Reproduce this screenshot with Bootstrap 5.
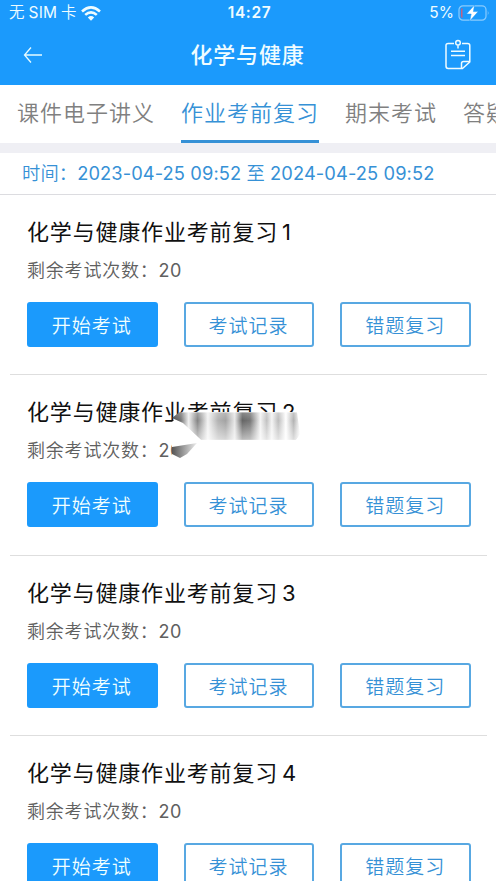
<!DOCTYPE html>
<html lang="zh-CN">
<head>
<meta charset="utf-8">
<meta name="viewport" content="width=device-width, initial-scale=1">
<title>化学与健康</title>
<link href="https://cdn.jsdelivr.net/npm/bootstrap@5.3.0/dist/css/bootstrap.min.css" rel="stylesheet">
<style>
:root { --brand: #1b9afc; --link: #3691d6; }
body { font-family: Inter, "Noto Sans CJK SC", sans-serif; background: #fff; height: 881px; overflow: hidden; line-height: 1; }
.topbar { background: var(--brand); height: 85px; color: #effcff; }
.status { height: 26px; font-size: 15.5px; padding: 0 6px 0 9px; }
.status > div { flex: 1 1 0; }
.carrier { letter-spacing: .1px; font-weight: 350; }
.clock { font-weight: 600; letter-spacing: .6px; }
.appbar { height: 58px; padding: 0 25px 0 23px; }
.appbar h1 { font-size: 22px; font-weight: 500; letter-spacing: .8px; line-height: 1; padding-left: 7px; }
.tabs { height: 58px; padding-left: 17px; gap: 26px; }
.tabs .nav-link { color: #808080; font-size: 22px; letter-spacing: 1px; padding: 0; height: 58px; line-height: 57px; font-weight: 350; white-space: nowrap; flex: none; border-bottom: 3px solid transparent; border-radius: 0; }
.tabs .nav-link.active { color: var(--link); border-bottom-color: var(--link); }
.band { height: 10px; background: #efeff4; }
.period { height: 42px; padding: 0 0 0 22px; color: var(--link); font-size: 18.3px; letter-spacing: .1px; font-weight: 350; border-bottom: 1px solid #dcdce0; white-space: pre; }
.digits { font-weight: 400; }
.exam { height: 180.33px; margin: 0 9px 0 10px; padding: 24px 16px 0 17px; border-bottom: 1px solid #dedede; }
.exam h2 { font-size: 22px; letter-spacing: .82px; line-height: 26px; color: #101010; margin-bottom: 15px; font-weight: 400; white-space: nowrap; }
.exam h2 span { margin-left: 4px; }
.exam p { font-size: 18px; letter-spacing: .8px; line-height: 22px; color: #606060; margin-bottom: 20px; font-weight: 350; }
.exam p .digits { letter-spacing: .3px; }
.exam .btn { flex: 1 1 0; min-width: 0; height: 45px; padding: 2px 1px 0 0; font-size: 19px; letter-spacing: 1px; line-height: 41px; border-radius: 3px; font-weight: 350; }
.btn-fill { background: var(--brand); border: 2px solid var(--brand); color: #f0ffff; }
.btn-line { background: #fff; border: 2px solid #58a8e2; color: var(--link); }
.actions { gap: 26px; }
.smear { left: 155px; top: 33px; }
</style>
<script src="https://cdn.jsdelivr.net/npm/bootstrap@5.3.0/dist/js/bootstrap.bundle.min.js"></script>
</head>
<body>
<header class="topbar">
  <div class="status d-flex align-items-center">
    <div class="d-flex align-items-center carrier">无<span class="ms-1 digits">SIM</span><span class="ms-1">卡</span>
      <svg class="ms-1" width="20" height="15" viewBox="0 0 20 15" fill="none" stroke="#effcff" stroke-width="2.6"><path d="M1 5.5Q10-2.6 19 5.5M4.2 8.9Q10 3.7 15.8 8.9"/><path d="M6.8 11.4Q10 8.7 13.2 11.4L10 14.8Z" fill="#effcff" stroke="none"/></svg>
    </div>
    <div class="text-center clock">14:27</div>
    <div class="d-flex align-items-center justify-content-end">5%
      <svg class="ms-1" width="32" height="16" viewBox="0 0 32 16"><rect x="1" y=".8" width="27" height="14.4" rx="4" fill="none" stroke="#8acbfd" stroke-width="1.2"/><path d="M4.5 3Q3 3 3 5v6q0 2 1.500 2z" fill="#c45f82"/><path d="M29.800 5.500q1.600 2.500 0 5z" fill="#8acbfd"/><path d="M16.500 0 8.500 9h4.700l-1.500 7L20.200 6.600h-4.800z" fill="#fff" stroke="#1b9afc" stroke-width=".5"/></svg>
    </div>
  </div>
  <nav class="appbar d-flex align-items-center justify-content-between">
    <svg width="20" height="18" viewBox="0 0 20 18" fill="none" stroke="#e5fbff" stroke-width="1.3"><path d="M8 1.500 1.500 9 8 16.500M1.500 9H19"/></svg>
    <h1 class="m-0">化学与健康</h1>
    <svg width="26" height="32" viewBox="0 0 26 32" fill="none" stroke="#effcff" stroke-width="1.500" stroke-linejoin="round"><path d="M9 4.500H3.200Q1 4.500 1 6.500V27Q1 29.500 3.200 29.500H17.500L24.800 23V6.500q0-2-2.200-2H17M16.500 29.500v-5q0-2 2-2h6.300"/><circle cx="13" cy="3.800" r="2.300"/><path d="M13 6.300v3.200M6 12.300h14M6 16.500h14"/></svg>
  </nav>
</header>
<nav class="nav tabs flex-nowrap overflow-hidden">
  <a class="nav-link">课件电子讲义</a>
  <a class="nav-link active">作业考前复习</a>
  <a class="nav-link">期末考试</a>
  <a class="nav-link">答疑</a>
</nav>
<div class="band"></div>
<div class="period d-flex align-items-center">时间：<span class="digits">2023-04-25 09:52 </span>至<span class="digits"> 2024-04-25 09:52</span></div>
<main>
  <section class="exam">
    <h2>化学与健康作业考前复习<span>1</span></h2>
    <p>剩余考试次数：<span class="digits">20</span></p>
    <div class="d-flex actions"><button class="btn btn-fill">开始考试</button><button class="btn btn-line">考试记录</button><button class="btn btn-line">错题复习</button></div>
  </section>
  <section class="exam position-relative">
    <h2>化学与健康作业考前复习<span>2</span></h2>
    <p>剩余考试次数：<span class="digits">20</span></p>
    <svg class="smear position-absolute" width="150" height="62" viewBox="165 408 150 62">
      <defs>
        <linearGradient id="streaks" gradientUnits="userSpaceOnUse" x1="172" y1="0" x2="300" y2="0">
          <stop offset="0" stop-color="#333"/><stop offset=".07" stop-color="#666"/><stop offset=".13" stop-color="#eee"/><stop offset=".2" stop-color="#777"/><stop offset=".28" stop-color="#f3f3f3"/><stop offset=".36" stop-color="#aaa"/><stop offset=".42" stop-color="#999"/><stop offset=".49" stop-color="#e5e5e5"/><stop offset=".55" stop-color="#555"/><stop offset=".61" stop-color="#666"/><stop offset=".69" stop-color="#f3f3f3"/><stop offset=".74" stop-color="#bbb"/><stop offset=".78" stop-color="#f3f3f3"/><stop offset=".83" stop-color="#b5b5b5"/><stop offset=".89" stop-color="#fff"/><stop offset=".95" stop-color="#aaa"/><stop offset="1" stop-color="#fff"/>
        </linearGradient>
        <linearGradient id="fade" x1="0" y1="0" x2="0" y2="1"><stop offset="0" stop-color="#fff" stop-opacity=".3"/><stop offset=".3" stop-color="#fff" stop-opacity=".1"/><stop offset="1" stop-color="#fff" stop-opacity=".6"/></linearGradient>
        <linearGradient id="tail" x1="0" y1="0" x2="1" y2="0"><stop offset="0" stop-color="#555"/><stop offset="1" stop-color="#eee"/></linearGradient>
        <filter id="soft"><feGaussianBlur stdDeviation=".7"/></filter>
      </defs>
      <path d="M172 422 182 412H300V462H172Z" fill="#fff"/>
      <g filter="url(#soft)"><path d="M172 418 179 412.500H297L300 434 296 439.500H201L183 423Z" fill="url(#streaks)"/><path d="M172 418 179 412.500H297L300 434 296 439.500H201L183 423Z" fill="url(#fade)"/>
      <path d="M172 447 197 443 187 454 180 458 172 454Z" fill="url(#tail)"/></g>
    </svg>
    <div class="d-flex actions"><button class="btn btn-fill">开始考试</button><button class="btn btn-line">考试记录</button><button class="btn btn-line">错题复习</button></div>
  </section>
  <section class="exam">
    <h2>化学与健康作业考前复习<span>3</span></h2>
    <p>剩余考试次数：<span class="digits">20</span></p>
    <div class="d-flex actions"><button class="btn btn-fill">开始考试</button><button class="btn btn-line">考试记录</button><button class="btn btn-line">错题复习</button></div>
  </section>
  <section class="exam">
    <h2>化学与健康作业考前复习<span>4</span></h2>
    <p>剩余考试次数：<span class="digits">20</span></p>
    <div class="d-flex actions"><button class="btn btn-fill">开始考试</button><button class="btn btn-line">考试记录</button><button class="btn btn-line">错题复习</button></div>
  </section>
</main>
</body>
</html>
